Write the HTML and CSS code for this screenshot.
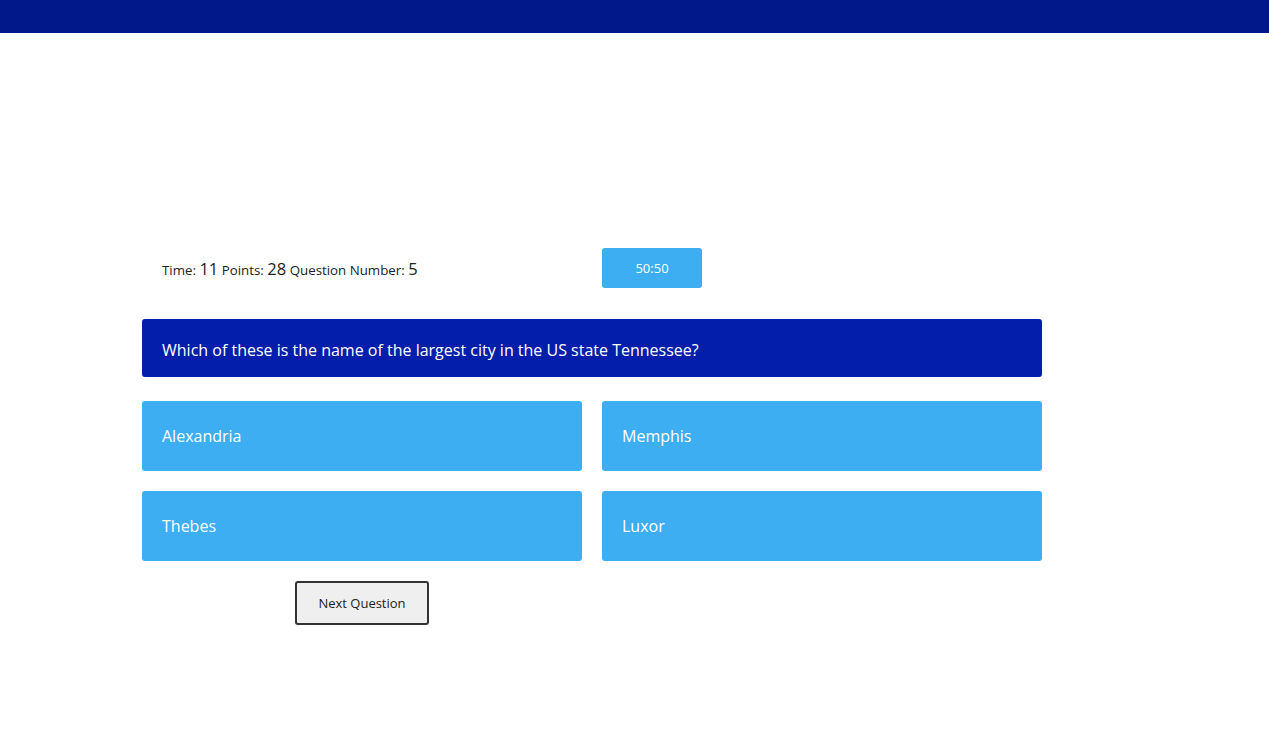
FILE: index.html
```html
<!DOCTYPE html>
<html>
<head>
<meta charset="utf-8">
<link rel="stylesheet" href="styles.css">
</head>
<body>
<header class="topbar"></header>
<main class="quiz">
  <div class="row info-row">
    <div class="stats">
      <span class="label">Time:</span> <span class="num">11</span>
      <span class="label">Points:</span> <span class="num">28</span>
      <span class="label">Question Number:</span> <span class="num">5</span>
    </div>
    <div class="cell"><button class="fifty">50:50</button></div>
  </div>
  <div class="question">Which of these is the name of the largest city in the US state Tennessee?</div>
  <div class="answers">
    <button class="answer">Alexandria</button>
    <button class="answer">Memphis</button>
    <button class="answer">Thebes</button>
    <button class="answer">Luxor</button>
  </div>
  <div class="row next-row">
    <div class="cell center"><button class="next">Next Question</button></div>
  </div>
</main>
</body>
</html>
```
FILE: styles.css
```css
* { box-sizing: border-box; }
html, body { margin: 0; padding: 0; background: #fff; }
body { font-family: "Open Sans", "Noto Sans", sans-serif; color: #222; }
.topbar { height: 33px; background: #00188a; }
.quiz { width: 900px; margin: 215px 0 0 142px; }
.row { display: grid; grid-template-columns: 440px 440px; column-gap: 20px; }
.info-row { height: 40px; align-items: center; }
.stats { padding-left: 20px; font-size: 13.3px; color: #222; }
.stats .num { font-size: 16.5px; }
.fifty { width: 100px; height: 40px; border: none; border-radius: 3px; background: #3daef2; color: #fff; font-family: inherit; font-size: 13px; }
.question { margin-top: 31px; height: 58px; background: #031eaa; color: #fff; border-radius: 3px; font-size: 16px; padding: 4px 20px 0; display: flex; align-items: center; }
.answers { margin-top: 24px; display: grid; grid-template-columns: 440px 440px; gap: 20px; }
.answer { height: 70px; background: #3daef2; color: #fff; border: none; border-radius: 3px; font-family: inherit; font-size: 16px; text-align: left; padding: 0 20px; }
.next-row { margin-top: 20px; }
.center { display: flex; justify-content: center; }
.next { width: 134px; height: 44px; background: #efefef; border: 2px solid #333; border-radius: 3px; font-family: inherit; font-size: 13px; color: #222; }
```
